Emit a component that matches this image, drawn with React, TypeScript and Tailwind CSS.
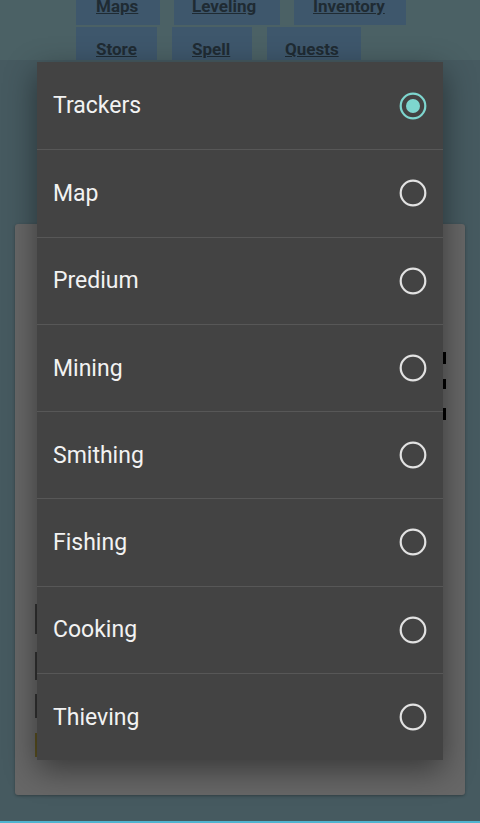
import { useState } from 'react';

const options = ['Trackers', 'Map', 'Predium', 'Mining', 'Smithing', 'Fishing', 'Cooking', 'Thieving'];

function Radio({ checked }: { checked: boolean }) {
  return (
    <svg width="28" height="28" viewBox="0 0 28 28">
      <circle cx="14" cy="14" r="12.3" fill="none" stroke={checked ? '#7ed6cf' : '#e2e2e2'} strokeWidth="2.2" />
      {checked && <circle cx="14" cy="14" r="7" fill="#7ed6cf" />}
    </svg>
  );
}

export default function App() {
  const [selected, setSelected] = useState('Trackers');

  return (
    <div className="relative w-[480px] h-[823px] overflow-hidden bg-[#465a60] font-['Roboto','Liberation_Sans',sans-serif]">
      {/* page behind the dimmed overlay */}
      <div className="flex flex-col">
        <div className="flex gap-[14px] pl-[76px] h-[28px] -mt-[3px] bg-[#4b6165]">
          <a className="w-[84px] bg-[#3e576c] pl-[20px] text-[17px] font-bold underline text-[#1f2b33] leading-[18px]">Maps</a>
          <a className="w-[106px] bg-[#3e576c] pl-[18px] text-[17px] font-bold underline text-[#1f2b33] leading-[18px]">Leveling</a>
          <a className="w-[112px] bg-[#3e576c] pl-[19px] text-[17px] font-bold underline text-[#1f2b33] leading-[18px]">Inventory</a>
        </div>
        <div className="flex gap-[15px] pl-[76px] h-[35px] pt-[2px] bg-[#4b6165]">
          <a className="w-[81px] bg-[#3e576c] pl-[20px] pt-[10px] text-[17px] font-bold underline text-[#1f2b33]">Store</a>
          <a className="w-[80px] bg-[#3e576c] pl-[20px] pt-[10px] text-[17px] font-bold underline text-[#1f2b33]">Spell</a>
          <a className="w-[94px] bg-[#3e576c] pl-[18px] pt-[10px] text-[17px] font-bold underline text-[#1f2b33]">Quests</a>
        </div>

        <div className="mt-[164px] mx-[15px] h-[571px] rounded-[3px] bg-[#676767] shadow-[0_1px_3px_rgba(0,0,0,0.3)] relative">
          <div className="absolute left-[428px] top-[128px] w-[3px] h-[12px] bg-black" />
          <div className="absolute left-[428px] top-[155px] w-[3px] h-[10px] bg-black" />
          <div className="absolute left-[428px] top-[184px] w-[3px] h-[12px] bg-black" />
          <div className="absolute left-[20px] top-[380px] w-[2px] h-[30px] bg-[#333]" />
          <div className="absolute left-[20px] top-[428px] w-[2px] h-[28px] bg-[#333]" />
          <div className="absolute left-[20px] top-[470px] w-[2px] h-[24px] bg-[#333]" />
          <div className="absolute left-[20px] top-[509px] w-[2px] h-[24px] bg-[#5a5020]" />
        </div>
        <div className="mt-[26px] h-[2px] bg-[#4fb4d0]" />
      </div>

      {/* dialog */}
      <div className="absolute left-[37px] top-[62px] w-[406px] bg-[#434343] shadow-[0_10px_30px_rgba(0,0,0,0.45)] flex flex-col">
        {options.map((opt, i) => (
          <div
            key={opt}
            onClick={() => setSelected(opt)}
            className={`flex items-center justify-between h-[87.25px] pl-[16px] pr-[16px] cursor-pointer ${i > 0 ? 'border-t border-[#575757]' : ''}`}
          >
            <span className="text-[23px] text-[#f2f2f2] pt-[2px]">{opt}</span>
            <Radio checked={selected === opt} />
          </div>
        ))}
      </div>
    </div>
  );
}
